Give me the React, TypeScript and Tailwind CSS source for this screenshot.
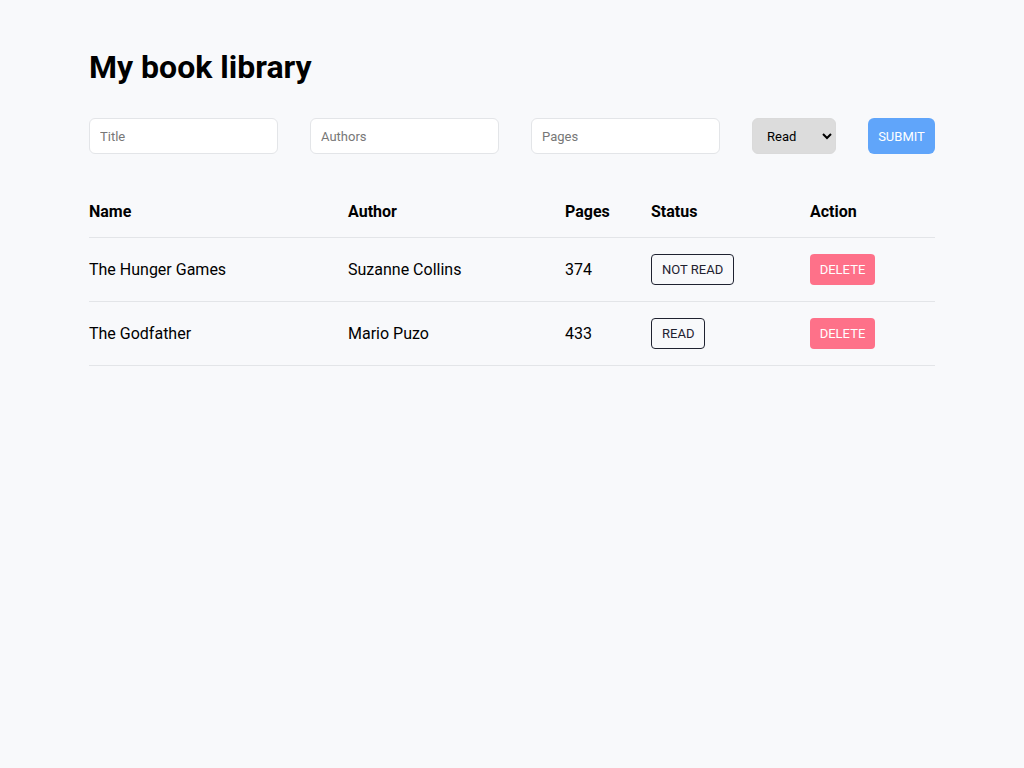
const books = [
  { name: 'The Hunger Games', author: 'Suzanne Collins', pages: 374, read: false },
  { name: 'The Godfather', author: 'Mario Puzo', pages: 433, read: true },
];

export default function App() {
  return (
    <div className="min-h-screen bg-[#f8f9fb] text-black font-['Roboto',sans-serif]">
      <div className="w-[846px] ml-[89px] pt-[44px]">
        <h1 className="text-[32px] leading-[46px] font-bold">My book library</h1>

        <form className="mt-[28px] flex items-center gap-8" onSubmit={(e) => e.preventDefault()}>
          <input
            placeholder="Title"
            className="w-[189px] h-9 px-[10px] bg-white border border-[#e3e5e8] rounded-md text-[13px] placeholder:text-[#777]"
          />
          <input
            placeholder="Authors"
            className="w-[189px] h-9 px-[10px] bg-white border border-[#e3e5e8] rounded-md text-[13px] placeholder:text-[#777]"
          />
          <input
            placeholder="Pages"
            className="w-[189px] h-9 px-[10px] bg-white border border-[#e3e5e8] rounded-md text-[13px] placeholder:text-[#777]"
          />
          <select className="w-[84px] h-9 pl-[10px] bg-[#dcdcdc] border border-[#dadada] rounded-md text-[13px]">
            <option>Read</option>
            <option>Not read</option>
          </select>
          <button className="w-[67px] h-9 pt-px bg-[#60a5fa] text-white text-[13px] rounded-md">SUBMIT</button>
        </form>

        <table className="mt-8 w-full border-collapse text-left">
          <thead>
            <tr className="h-[51px] border-b border-[#e3e5e8]">
              <th className="w-[259px] pt-[2px] font-bold text-base">Name</th>
              <th className="w-[217px] pt-[2px] font-bold text-base">Author</th>
              <th className="w-[86px] pt-[2px] font-bold text-base">Pages</th>
              <th className="w-[159px] pt-[2px] font-bold text-base">Status</th>
              <th className="pt-[2px] font-bold text-base">Action</th>
            </tr>
          </thead>
          <tbody>
            {books.map((b) => (
              <tr key={b.name} className="h-16 border-b border-[#e3e5e8]">
                <td className="pt-[2px] text-base">{b.name}</td>
                <td className="pt-[2px] text-base">{b.author}</td>
                <td className="pt-[2px] text-base">{b.pages}</td>
                <td>
                  <button className="h-[31px] px-[10px] pt-px border border-[#1f2230] rounded-[4px] text-[13px] text-[#1f2230]">
                    {b.read ? 'READ' : 'NOT READ'}
                  </button>
                </td>
                <td>
                  <button className="w-[65px] h-[31px] pt-px bg-[#fe7189] text-white text-[13px] rounded-[4px]">DELETE</button>
                </td>
              </tr>
            ))}
          </tbody>
        </table>
      </div>
    </div>
  );
}
